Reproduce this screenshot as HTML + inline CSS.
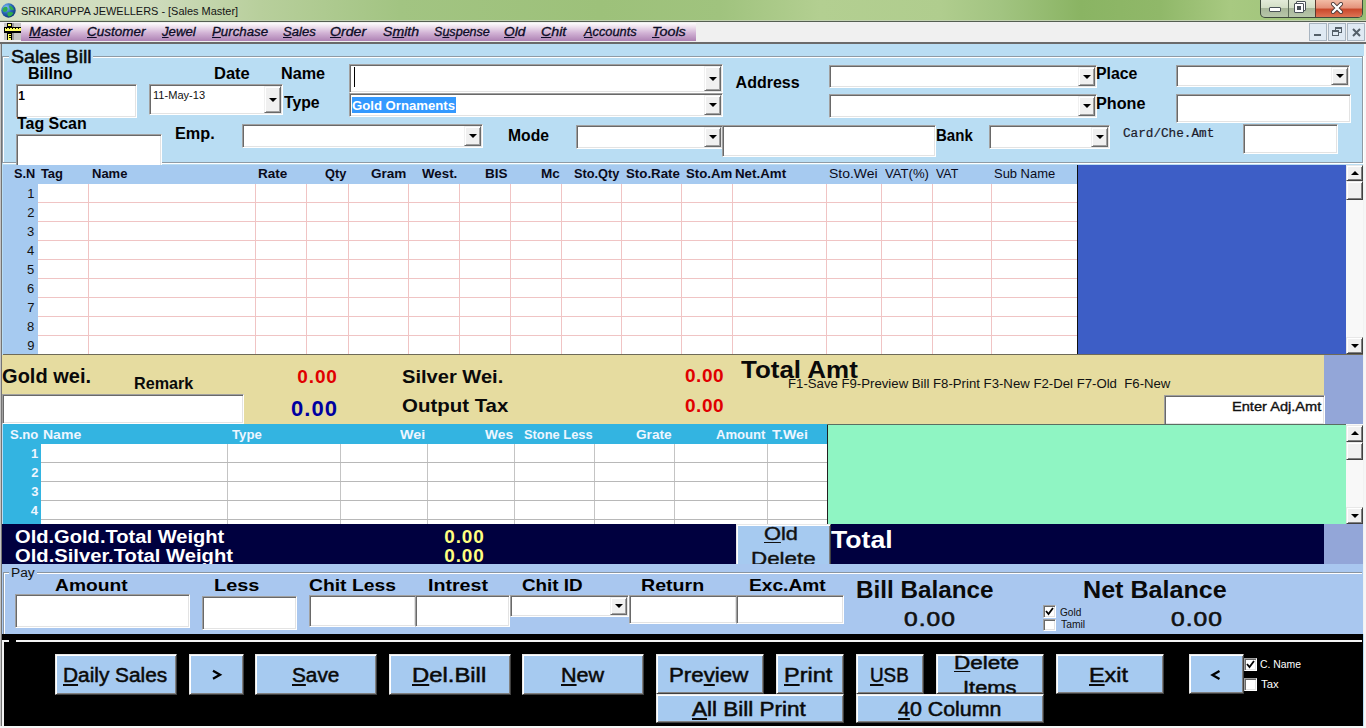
<!DOCTYPE html><html><head><meta charset="utf-8"><style>
*{margin:0;padding:0;box-sizing:border-box}
html,body{width:1366px;height:728px;overflow:hidden;background:#f0f0f0;font-family:"Liberation Sans",sans-serif}
div{position:absolute}
i{position:absolute;display:block;width:0;height:0}
.t{white-space:nowrap;line-height:1}
.sunk{border-top:1px solid #a0a0a0;border-left:1px solid #a0a0a0;border-bottom:1px solid #fff;border-right:1px solid #fff;box-shadow:inset 1px 1px 0 #696969,inset -1px -1px 0 #e3e3e3}
.ddb{background:#f0f0f0;border-top:1px solid #f0f0f0;border-left:1px solid #f0f0f0;border-bottom:1px solid #696969;border-right:1px solid #696969;box-shadow:inset 1px 1px 0 #fff,inset -1px -1px 0 #a0a0a0}
.ddb i{border-left:4px solid transparent;border-right:4px solid transparent;border-top:4px solid #000}
.rz{border-top:1px solid #e8e8e8;border-left:1px solid #e8e8e8;border-bottom:1px solid #404040;border-right:1px solid #404040;box-shadow:inset 1px 1px 0 #fff,inset -1px -1px 0 #808080}
.u{text-decoration:underline;text-underline-offset:0.1em;text-decoration-thickness:0.075em}
</style></head><body><div class="" style="left:0px;top:0px;width:1366px;height:21px;background:linear-gradient(90deg,#d3dfc4 0px,#cfdcbd 150px,#b8cf9c 260px,#a2c482 400px,#9dc17a 600px,#a0c37e 720px,#b3cf91 820px,#b0cd8e 940px,#a2c481 1000px,#8ab463 1080px,#90b869 1160px,#a8c981 1230px,#98bf74 1366px)"></div>
<div class="" style="left:0px;top:20px;width:1366px;height:1px;background:#c2d2b0"></div>
<div class="" style="left:0px;top:21px;width:1366px;height:1px;background:#555f52"></div>
<svg style="position:absolute;left:1px;top:3px" width="15" height="15" viewBox="0 0 15 15"><defs><radialGradient id="gg" cx="35%" cy="30%" r="70%"><stop offset="0" stop-color="#8fc8ff"/><stop offset="0.55" stop-color="#2a68b8"/><stop offset="1" stop-color="#123d80"/></radialGradient></defs><circle cx="7.5" cy="7.5" r="7.2" fill="url(#gg)"/><path d="M1.5 6 Q3.5 3 6 4 Q7.5 6 5.5 8.5 Q3 9.5 2 8Z M8 2.2 Q11.5 3 13 6.5 Q11 7.5 9 6 Q8 4 8 2.2Z M6.5 9.5 Q10 8.5 12.5 10 Q10.5 13.5 7.5 13.5 Q6 11.5 6.5 9.5Z" fill="#2fae4a"/></svg>
<div class="t" style="left:21.12px;top:6.00px;font-size:11.5px;font-weight:normal;color:#141414;transform:scaleX(0.9523);transform-origin:0 0;">SRIKARUPPA JEWELLERS - [Sales Master]</div>
<div style="left:1260px;top:0;width:103px;height:18px;border:1px solid #3e4a3c;border-top:none;border-radius:0 0 5px 5px;overflow:hidden;background:linear-gradient(#e3ebd9 0,#d3dfc6 45%,#a8b79a 50%,#b8c6aa 100%)"><div style="left:27px;top:0;width:1px;height:18px;background:#5c6a58"></div><div style="left:54px;top:0;width:48px;height:18px;background:linear-gradient(#f2bba5 0,#e4917a 45%,#c8472a 50%,#e07a5a 100%);border-left:1px solid #5a3a30"></div><div style="left:8px;top:7px;width:12px;height:5px;background:#fff;border:1px solid #4a5258;border-radius:1px"></div><div style="left:35px;top:1px;width:10px;height:10px;border:1px solid #4a5258;background:#fff;border-radius:1px"></div><div style="left:33px;top:3px;width:10px;height:10px;border:1px solid #4a5258;background:#fff;border-radius:1px"></div><div style="left:36px;top:6px;width:4px;height:4px;background:#4a5258"></div><svg style="position:absolute;left:70px;top:2px" width="12" height="12" viewBox="0 0 12 12"><path d="M2 2 L10 10 M10 2 L2 10" stroke="#4a3a38" stroke-width="4" stroke-linecap="round"/><path d="M2 2 L10 10 M10 2 L2 10" stroke="#fff" stroke-width="2.4" stroke-linecap="round"/></svg></div>
<div class="" style="left:0px;top:22px;width:1366px;height:20px;background:#f0f0f0"></div>
<div class="" style="left:21px;top:23px;width:675px;height:18px;background:linear-gradient(#fdfbfd 0%,#efe3ef 20%,#d2b3d5 55%,#ae82b4 100%)"></div>
<svg style="position:absolute;left:4px;top:23px" width="17" height="17" viewBox="0 0 17 17"><rect x="0" y="0" width="17" height="17" fill="#c6c6c6"/><rect x="8" y="0" width="2" height="17" fill="#9a9a9a"/><rect x="3" y="0" width="5" height="17" fill="#000"/><rect x="0" y="4" width="17" height="6" fill="#000"/><rect x="1" y="5" width="16" height="3" fill="#ffff60"/><rect x="2" y="5" width="1" height="1" fill="#000"/><rect x="5" y="5" width="1" height="1" fill="#000"/><rect x="8" y="5" width="1" height="1" fill="#000"/><rect x="11" y="5" width="1" height="1" fill="#000"/><rect x="14" y="5" width="1" height="1" fill="#000"/><rect x="4" y="1" width="3" height="2" fill="#ffff60"/><rect x="4" y="11" width="3" height="6" fill="#ffff60"/><rect x="5" y="12" width="2" height="1" fill="#000"/><rect x="5" y="14" width="2" height="1" fill="#000"/></svg>
<div class="t" style="left:28.53px;top:26.00px;font-size:12px;font-weight:normal;color:#0c0c26;font-style:italic;-webkit-text-stroke:0.3px #0c0c26;transform:scaleX(1.1717);transform-origin:0 0;"><span class="u">M</span>aster</div>
<div class="t" style="left:87.21px;top:26.00px;font-size:12px;font-weight:normal;color:#0c0c26;font-style:italic;-webkit-text-stroke:0.3px #0c0c26;transform:scaleX(1.1219);transform-origin:0 0;"><span class="u">C</span>ustomer</div>
<div class="t" style="left:162.00px;top:26.00px;font-size:12px;font-weight:normal;color:#0c0c26;font-style:italic;-webkit-text-stroke:0.3px #0c0c26;transform:scaleX(1.1003);transform-origin:0 0;"><span class="u">J</span>ewel</div>
<div class="t" style="left:211.56px;top:26.00px;font-size:12px;font-weight:normal;color:#0c0c26;font-style:italic;-webkit-text-stroke:0.3px #0c0c26;transform:scaleX(1.1044);transform-origin:0 0;"><span class="u">P</span>urchase</div>
<div class="t" style="left:282.67px;top:26.00px;font-size:12px;font-weight:normal;color:#0c0c26;font-style:italic;-webkit-text-stroke:0.3px #0c0c26;transform:scaleX(1.0884);transform-origin:0 0;"><span class="u">S</span>ales</div>
<div class="t" style="left:330.29px;top:26.00px;font-size:12px;font-weight:normal;color:#0c0c26;font-style:italic;-webkit-text-stroke:0.3px #0c0c26;transform:scaleX(1.1803);transform-origin:0 0;"><span class="u">O</span>rder</div>
<div class="t" style="left:382.65px;top:26.00px;font-size:12px;font-weight:normal;color:#0c0c26;font-style:italic;-webkit-text-stroke:0.3px #0c0c26;transform:scaleX(1.1745);transform-origin:0 0;">S<span class="u">m</span>ith</div>
<div class="t" style="left:433.69px;top:26.00px;font-size:12px;font-weight:normal;color:#0c0c26;font-style:italic;-webkit-text-stroke:0.3px #0c0c26;transform:scaleX(1.0456);transform-origin:0 0;">S<span class="u">u</span>spense</div>
<div class="t" style="left:504.32px;top:26.00px;font-size:12px;font-weight:normal;color:#0c0c26;font-style:italic;-webkit-text-stroke:0.3px #0c0c26;transform:scaleX(1.1413);transform-origin:0 0;"><span class="u">O</span>ld</div>
<div class="t" style="left:541.17px;top:26.00px;font-size:12px;font-weight:normal;color:#0c0c26;font-style:italic;-webkit-text-stroke:0.3px #0c0c26;transform:scaleX(1.1848);transform-origin:0 0;"><span class="u">C</span>hit</div>
<div class="t" style="left:583.64px;top:26.00px;font-size:12px;font-weight:normal;color:#0c0c26;font-style:italic;-webkit-text-stroke:0.3px #0c0c26;transform:scaleX(1.0664);transform-origin:0 0;"><span class="u">A</span>ccounts</div>
<div class="t" style="left:651.69px;top:26.00px;font-size:12px;font-weight:normal;color:#0c0c26;font-style:italic;-webkit-text-stroke:0.3px #0c0c26;transform:scaleX(1.1940);transform-origin:0 0;"><span class="u">T</span>ools</div>
<div style="left:1309px;top:23px;width:18px;height:18px;background:#dfe9f3;border:1px solid #a8b4c0"><div style="left:4px;top:10px;width:7px;height:2px;background:#55606a"></div></div>
<div style="left:1328px;top:23px;width:18px;height:18px;background:#dfe9f3;border:1px solid #a8b4c0"><div style="left:6px;top:3px;width:7px;height:6px;border:1px solid #55606a;border-top-width:2px"></div><div style="left:3px;top:6px;width:7px;height:6px;border:1px solid #55606a;border-top-width:2px;background:#dfe9f3"></div></div>
<div style="left:1347px;top:23px;width:18px;height:18px;background:#dfe9f3;border:1px solid #a8b4c0"><svg style="position:absolute;left:4px;top:4px" width="9" height="9" viewBox="0 0 9 9"><path d="M1 1 L8 8 M8 1 L1 8" stroke="#55606a" stroke-width="2"/></svg></div>
<div class="" style="left:0px;top:42px;width:1366px;height:2px;background:#6a6a6a"></div>
<div class="" style="left:0px;top:44px;width:1366px;height:684px;background:#b9ddf3"></div>
<div class="" style="left:0px;top:44px;width:1px;height:684px;background:#c4c4c4"></div>
<div class="" style="left:1px;top:44px;width:1px;height:684px;background:#747474"></div>
<div class="" style="left:1364px;top:44px;width:2px;height:684px;background:#f6f6f6"></div>
<div class="" style="left:2px;top:56px;width:1361px;height:1px;background:#8f9ba5"></div>
<div class="" style="left:3px;top:57px;width:1359px;height:1px;background:#fff"></div>
<div class="" style="left:2px;top:56px;width:1px;height:107px;background:#8f9ba5"></div>
<div class="" style="left:3px;top:57px;width:1px;height:106px;background:#fff"></div>
<div class="" style="left:1362px;top:56px;width:1px;height:107px;background:#8f9ba5"></div>
<div class="" style="left:1363px;top:56px;width:1px;height:108px;background:#fff"></div>
<div class="" style="left:2px;top:162px;width:1361px;height:1px;background:#8f9ba5"></div>
<div class="" style="left:3px;top:163px;width:1361px;height:1px;background:#fff"></div>
<div style="left:9px;top:50px;width:84px;height:12px;background:#b9ddf3"></div>
<div class="t" style="left:10.55px;top:48.00px;font-size:18.5px;font-weight:normal;color:#0a0a0a;-webkit-text-stroke:0.5px #0a0a0a;transform:scaleX(1.0608);transform-origin:0 0;">Sales Bill</div>
<div class="sunk" style="left:16px;top:84px;width:121px;height:34px;background:#fff;"></div>
<div class="t" style="left:18.30px;top:90.00px;font-size:12px;font-weight:bold;color:#000;">1</div>
<div class="sunk" style="left:149px;top:84px;width:134px;height:31px;background:#fff;"></div>
<div class="ddb" style="left:264px;top:86px;width:17px;height:27px;"><i style="left:3.5px;top:10.5px"></i></div>
<div class="t" style="left:152.90px;top:90.00px;font-size:11px;font-weight:normal;color:#111;transform:scaleX(1.0060);transform-origin:0 0;">11-May-13</div>
<div class="sunk" style="left:16px;top:134px;width:146px;height:34px;background:#fff;"></div>
<div class="sunk" style="left:349px;top:64px;width:374px;height:29px;background:#fff;"></div>
<div class="ddb" style="left:704px;top:66px;width:17px;height:25px;"><i style="left:3.5px;top:9.5px"></i></div>
<div style="left:354px;top:67px;width:1px;height:20px;background:#000"></div>
<div class="sunk" style="left:349px;top:93px;width:374px;height:24px;background:#fff;"></div>
<div class="ddb" style="left:704px;top:95px;width:17px;height:20px;"><i style="left:3.5px;top:7.0px"></i></div>
<div style="left:352px;top:97px;width:104px;height:16px;background:#3399ff"></div>
<div class="t" style="left:352.29px;top:99.00px;font-size:13px;font-weight:bold;color:#fff;transform:scaleX(1.0119);transform-origin:0 0;">Gold Ornaments</div>
<div class="sunk" style="left:242px;top:124px;width:241px;height:24px;background:#fff;"></div>
<div class="ddb" style="left:464px;top:126px;width:17px;height:20px;"><i style="left:3.5px;top:7.0px"></i></div>
<div class="sunk" style="left:576px;top:125px;width:147px;height:24px;background:#fff;"></div>
<div class="ddb" style="left:704px;top:127px;width:17px;height:20px;"><i style="left:3.5px;top:7.0px"></i></div>
<div class="sunk" style="left:722px;top:125px;width:214px;height:32px;background:#fff;"></div>
<div class="sunk" style="left:829px;top:65px;width:268px;height:23px;background:#fff;"></div>
<div class="ddb" style="left:1078px;top:67px;width:17px;height:19px;"><i style="left:3.5px;top:6.5px"></i></div>
<div class="sunk" style="left:829px;top:94px;width:268px;height:24px;background:#fff;"></div>
<div class="ddb" style="left:1078px;top:96px;width:17px;height:20px;"><i style="left:3.5px;top:7.0px"></i></div>
<div class="sunk" style="left:989px;top:125px;width:121px;height:24px;background:#fff;"></div>
<div class="ddb" style="left:1091px;top:127px;width:17px;height:20px;"><i style="left:3.5px;top:7.0px"></i></div>
<div class="sunk" style="left:1176px;top:65px;width:174px;height:22px;background:#fff;"></div>
<div class="ddb" style="left:1331px;top:67px;width:17px;height:18px;"><i style="left:3.5px;top:6.0px"></i></div>
<div class="sunk" style="left:1176px;top:94px;width:175px;height:29px;background:#fff;"></div>
<div class="sunk" style="left:1243px;top:124px;width:95px;height:30px;background:#fff;"></div>
<div class="t" style="left:28.39px;top:66.00px;font-size:16px;font-weight:bold;color:#000;transform:scaleX(1.0047);transform-origin:0 0;">Billno</div>
<div class="t" style="left:214.27px;top:66.00px;font-size:16px;font-weight:bold;color:#000;transform:scaleX(1.0302);transform-origin:0 0;">Date</div>
<div class="t" style="left:281.39px;top:66.00px;font-size:16px;font-weight:bold;color:#000;transform:scaleX(1.0119);transform-origin:0 0;">Name</div>
<div class="t" style="left:283.80px;top:95.00px;font-size:16px;font-weight:bold;color:#000;transform:scaleX(0.9859);transform-origin:0 0;">Type</div>
<div class="t" style="left:17.20px;top:116.00px;font-size:16px;font-weight:bold;color:#000;transform:scaleX(0.9971);transform-origin:0 0;">Tag Scan</div>
<div class="t" style="left:174.58px;top:126.00px;font-size:16px;font-weight:bold;color:#000;transform:scaleX(1.0162);transform-origin:0 0;">Emp.</div>
<div class="t" style="left:735.60px;top:75.00px;font-size:16px;font-weight:bold;color:#000;">Address</div>
<div class="t" style="left:1096.41px;top:66.00px;font-size:16px;font-weight:bold;color:#000;transform:scaleX(0.9900);transform-origin:0 0;">Place</div>
<div class="t" style="left:1096.39px;top:96.00px;font-size:16px;font-weight:bold;color:#000;transform:scaleX(1.0106);transform-origin:0 0;">Phone</div>
<div class="t" style="left:508.12px;top:128.00px;font-size:16px;font-weight:bold;color:#000;transform:scaleX(0.9801);transform-origin:0 0;">Mode</div>
<div class="t" style="left:935.97px;top:128.00px;font-size:16px;font-weight:bold;color:#000;transform:scaleX(0.9395);transform-origin:0 0;">Bank</div>
<div class="t" style="left:1122.69px;top:128.00px;font-size:12.5px;font-weight:normal;color:#1a1a2a;font-family:'Liberation Mono',monospace;-webkit-text-stroke:0.2px #1a1a2a;transform:scaleX(1.0136);transform-origin:0 0;">Card/Che.Amt</div>
<div class="" style="left:3px;top:165px;width:1075px;height:19px;background:#a6caf0"></div>
<div class="" style="left:3px;top:184px;width:35px;height:170px;background:#a6caf0"></div>
<div class="" style="left:38px;top:184px;width:1039px;height:170px;background:#fff"></div>
<div class="" style="left:88px;top:184px;width:1px;height:170px;background:#f0c4c4"></div>
<div class="" style="left:255px;top:184px;width:1px;height:170px;background:#f0c4c4"></div>
<div class="" style="left:306px;top:184px;width:1px;height:170px;background:#f0c4c4"></div>
<div class="" style="left:348px;top:184px;width:1px;height:170px;background:#f0c4c4"></div>
<div class="" style="left:408px;top:184px;width:1px;height:170px;background:#f0c4c4"></div>
<div class="" style="left:459px;top:184px;width:1px;height:170px;background:#f0c4c4"></div>
<div class="" style="left:510px;top:184px;width:1px;height:170px;background:#f0c4c4"></div>
<div class="" style="left:561px;top:184px;width:1px;height:170px;background:#f0c4c4"></div>
<div class="" style="left:621px;top:184px;width:1px;height:170px;background:#f0c4c4"></div>
<div class="" style="left:681px;top:184px;width:1px;height:170px;background:#f0c4c4"></div>
<div class="" style="left:732px;top:184px;width:1px;height:170px;background:#f0c4c4"></div>
<div class="" style="left:826px;top:184px;width:1px;height:170px;background:#f0c4c4"></div>
<div class="" style="left:881px;top:184px;width:1px;height:170px;background:#f0c4c4"></div>
<div class="" style="left:932px;top:184px;width:1px;height:170px;background:#f0c4c4"></div>
<div class="" style="left:991px;top:184px;width:1px;height:170px;background:#f0c4c4"></div>
<div class="" style="left:38px;top:202px;width:1039px;height:1px;background:#f0c4c4"></div>
<div class="t" style="left:27.20px;top:187.00px;font-size:13px;font-weight:normal;color:#111;">1</div>
<div class="" style="left:38px;top:221px;width:1039px;height:1px;background:#f0c4c4"></div>
<div class="t" style="left:27.20px;top:206.00px;font-size:13px;font-weight:normal;color:#111;">2</div>
<div class="" style="left:38px;top:240px;width:1039px;height:1px;background:#f0c4c4"></div>
<div class="t" style="left:27.10px;top:225.00px;font-size:13px;font-weight:normal;color:#111;">3</div>
<div class="" style="left:38px;top:259px;width:1039px;height:1px;background:#f0c4c4"></div>
<div class="t" style="left:26.90px;top:244.00px;font-size:13px;font-weight:normal;color:#111;">4</div>
<div class="" style="left:38px;top:278px;width:1039px;height:1px;background:#f0c4c4"></div>
<div class="t" style="left:27.10px;top:263.00px;font-size:13px;font-weight:normal;color:#111;">5</div>
<div class="" style="left:38px;top:297px;width:1039px;height:1px;background:#f0c4c4"></div>
<div class="t" style="left:27.10px;top:282.00px;font-size:13px;font-weight:normal;color:#111;">6</div>
<div class="" style="left:38px;top:316px;width:1039px;height:1px;background:#f0c4c4"></div>
<div class="t" style="left:27.20px;top:301.00px;font-size:13px;font-weight:normal;color:#111;">7</div>
<div class="" style="left:38px;top:335px;width:1039px;height:1px;background:#f0c4c4"></div>
<div class="t" style="left:27.10px;top:320.00px;font-size:13px;font-weight:normal;color:#111;">8</div>
<div class="t" style="left:27.20px;top:339.00px;font-size:13px;font-weight:normal;color:#111;">9</div>
<div class="t" style="left:13.91px;top:167.00px;font-size:13px;font-weight:bold;color:#0a0a1a;transform:scaleX(0.9804);transform-origin:0 0;">S.N</div>
<div class="t" style="left:40.90px;top:167.00px;font-size:13px;font-weight:bold;color:#0a0a1a;">Tag</div>
<div class="t" style="left:92.00px;top:167.00px;font-size:13px;font-weight:bold;color:#0a0a1a;">Name</div>
<div class="t" style="left:258.46px;top:167.00px;font-size:13px;font-weight:bold;color:#0a0a1a;transform:scaleX(1.0410);transform-origin:0 0;">Rate</div>
<div class="t" style="left:324.61px;top:167.00px;font-size:13px;font-weight:bold;color:#0a0a1a;transform:scaleX(0.9810);transform-origin:0 0;">Qty</div>
<div class="t" style="left:370.88px;top:167.00px;font-size:13px;font-weight:bold;color:#0a0a1a;transform:scaleX(1.0428);transform-origin:0 0;">Gram</div>
<div class="t" style="left:422.20px;top:167.00px;font-size:13px;font-weight:bold;color:#0a0a1a;transform:scaleX(1.0239);transform-origin:0 0;">West.</div>
<div class="t" style="left:485.46px;top:167.00px;font-size:13px;font-weight:bold;color:#0a0a1a;transform:scaleX(1.0394);transform-origin:0 0;">BIS</div>
<div class="t" style="left:540.66px;top:167.00px;font-size:13px;font-weight:bold;color:#0a0a1a;transform:scaleX(1.0419);transform-origin:0 0;">Mc</div>
<div class="t" style="left:573.61px;top:167.00px;font-size:13px;font-weight:bold;color:#0a0a1a;transform:scaleX(0.9825);transform-origin:0 0;">Sto.Qty</div>
<div class="t" style="left:625.59px;top:167.00px;font-size:13px;font-weight:bold;color:#0a0a1a;transform:scaleX(1.0212);transform-origin:0 0;">Sto.Rate</div>
<div class="t" style="left:685.59px;top:167.00px;font-size:13px;font-weight:bold;color:#0a0a1a;transform:scaleX(1.0158);transform-origin:0 0;">Sto.Am</div>
<div class="t" style="left:735.08px;top:167.00px;font-size:13px;font-weight:bold;color:#0a0a1a;transform:scaleX(1.0246);transform-origin:0 0;">Net.Amt</div>
<div class="t" style="left:829.36px;top:167.00px;font-size:13px;font-weight:normal;color:#0a0a1a;transform:scaleX(1.0731);transform-origin:0 0;">Sto.Wei</div>
<div class="t" style="left:884.90px;top:167.00px;font-size:13px;font-weight:normal;color:#0a0a1a;transform:scaleX(1.0094);transform-origin:0 0;">VAT(%)</div>
<div class="t" style="left:935.90px;top:167.00px;font-size:13px;font-weight:normal;color:#0a0a1a;transform:scaleX(0.9565);transform-origin:0 0;">VAT</div>
<div class="t" style="left:994.40px;top:167.00px;font-size:13px;font-weight:normal;color:#0a0a1a;transform:scaleX(0.9950);transform-origin:0 0;">Sub Name</div>
<div class="" style="left:1077px;top:165px;width:1px;height:189px;background:#101010"></div>
<div class="" style="left:1078px;top:165px;width:268px;height:189px;background:#3d5ec6"></div>
<div class="" style="left:1346px;top:165px;width:17px;height:189px;background:#f8f8f8"></div>
<div class="" style="left:1363px;top:164px;width:1px;height:470px;background:#f2f2f2"></div>
<div class="rz" style="left:1346px;top:165px;width:17px;height:16px;background:#f0f0f0;"><i style="left:4px;top:5px;border-left:4px solid transparent;border-right:4px solid transparent;border-bottom:4px solid #000"></i></div>
<div class="rz" style="left:1346px;top:181px;width:17px;height:19px;background:#f0f0f0;"></div>
<div class="rz" style="left:1346px;top:337px;width:17px;height:17px;background:#f0f0f0;"><i style="left:4px;top:6px;border-left:4px solid transparent;border-right:4px solid transparent;border-top:4px solid #000"></i></div>
<div class="" style="left:3px;top:354px;width:1360px;height:1px;background:#6e6a58"></div>
<div class="" style="left:2px;top:355px;width:1322px;height:69px;background:#e6dca0"></div>
<div class="" style="left:1324px;top:355px;width:39px;height:69px;background:#93a6d8"></div>
<div class="sunk" style="left:2px;top:394px;width:242px;height:30px;background:#fff;"></div>
<div class="t" style="left:2.10px;top:366.00px;font-size:20px;font-weight:bold;color:#0a0a0a;">Gold wei.</div>
<div class="t" style="left:134.42px;top:375.00px;font-size:16.5px;font-weight:bold;color:#0a0a0a;transform:scaleX(0.9798);transform-origin:0 0;">Remark</div>
<div class="t" style="left:297.30px;top:367.00px;font-size:19px;font-weight:bold;color:#e00000;letter-spacing:0.867px;">0.00</div>
<div class="t" style="left:290.90px;top:398.00px;font-size:22px;font-weight:bold;color:#0000a0;letter-spacing:1.100px;">0.00</div>
<div class="t" style="left:402.07px;top:367.00px;font-size:19px;font-weight:bold;color:#0a0a0a;transform:scaleX(1.0575);transform-origin:0 0;">Silver Wei.</div>
<div class="t" style="left:401.84px;top:396.00px;font-size:19px;font-weight:bold;color:#0a0a0a;transform:scaleX(1.0756);transform-origin:0 0;">Output Tax</div>
<div class="t" style="left:685.00px;top:366.00px;font-size:19px;font-weight:bold;color:#e00000;letter-spacing:0.533px;">0.00</div>
<div class="t" style="left:685.00px;top:396.00px;font-size:19px;font-weight:bold;color:#e00000;letter-spacing:0.533px;">0.00</div>
<div class="t" style="left:741.48px;top:358.00px;font-size:24.5px;font-weight:bold;color:#0a0a0a;transform:scaleX(1.0593);transform-origin:0 0;">Total Amt</div>
<div class="t" style="left:788.28px;top:377.00px;font-size:13px;font-weight:normal;color:#111;transform:scaleX(1.0141);transform-origin:0 0;">F1-Save F9-Preview Bill F8-Print F3-New F2-Del F7-Old&nbsp; F6-New</div>
<div class="sunk" style="left:1164px;top:395px;width:161px;height:30px;background:#fff;"></div>
<div class="t" style="left:1232.26px;top:400.00px;font-size:13px;font-weight:normal;color:#111;-webkit-text-stroke:0.35px #111;transform:scaleX(1.1239);transform-origin:0 0;">Enter Adj.Amt</div>
<div class="" style="left:3px;top:424px;width:824px;height:20px;background:#33b4e1"></div>
<div class="" style="left:3px;top:444px;width:38px;height:80px;background:#33b4e1"></div>
<div class="" style="left:41px;top:444px;width:786px;height:80px;background:#fff"></div>
<div class="" style="left:227px;top:444px;width:1px;height:80px;background:#c4c4c4"></div>
<div class="" style="left:340px;top:444px;width:1px;height:80px;background:#c4c4c4"></div>
<div class="" style="left:427px;top:444px;width:1px;height:80px;background:#c4c4c4"></div>
<div class="" style="left:514px;top:444px;width:1px;height:80px;background:#c4c4c4"></div>
<div class="" style="left:594px;top:444px;width:1px;height:80px;background:#c4c4c4"></div>
<div class="" style="left:674px;top:444px;width:1px;height:80px;background:#c4c4c4"></div>
<div class="" style="left:767px;top:444px;width:1px;height:80px;background:#c4c4c4"></div>
<div class="" style="left:41px;top:462px;width:786px;height:1px;background:#b8b8b8"></div>
<div class="t" style="left:31.10px;top:447.00px;font-size:13px;font-weight:bold;color:#eef6ff;">1</div>
<div class="" style="left:41px;top:481px;width:786px;height:1px;background:#b8b8b8"></div>
<div class="t" style="left:31.30px;top:466.00px;font-size:13px;font-weight:bold;color:#eef6ff;">2</div>
<div class="" style="left:41px;top:500px;width:786px;height:1px;background:#b8b8b8"></div>
<div class="t" style="left:31.20px;top:485.00px;font-size:13px;font-weight:bold;color:#eef6ff;">3</div>
<div class="" style="left:41px;top:519px;width:786px;height:1px;background:#b8b8b8"></div>
<div class="t" style="left:30.80px;top:504.00px;font-size:13px;font-weight:bold;color:#eef6ff;">4</div>
<div class="t" style="left:10.06px;top:429.00px;font-size:12px;font-weight:bold;color:#eef6ff;transform:scaleX(1.0913);transform-origin:0 0;">S.no</div>
<div class="t" style="left:43.27px;top:429.00px;font-size:12px;font-weight:bold;color:#eef6ff;transform:scaleX(1.1683);transform-origin:0 0;">Name</div>
<div class="t" style="left:231.69px;top:429.00px;font-size:12px;font-weight:bold;color:#eef6ff;transform:scaleX(1.0977);transform-origin:0 0;">Type</div>
<div class="t" style="left:400.40px;top:429.00px;font-size:12px;font-weight:bold;color:#eef6ff;transform:scaleX(1.1921);transform-origin:0 0;">Wei</div>
<div class="t" style="left:485.00px;top:429.00px;font-size:12px;font-weight:bold;color:#eef6ff;transform:scaleX(1.1458);transform-origin:0 0;">Wes</div>
<div class="t" style="left:524.17px;top:429.00px;font-size:12px;font-weight:bold;color:#eef6ff;transform:scaleX(1.0729);transform-origin:0 0;">Stone Less</div>
<div class="t" style="left:636.43px;top:429.00px;font-size:12px;font-weight:bold;color:#eef6ff;transform:scaleX(1.1377);transform-origin:0 0;">Grate</div>
<div class="t" style="left:715.67px;top:429.00px;font-size:12px;font-weight:bold;color:#eef6ff;transform:scaleX(1.0913);transform-origin:0 0;">Amount</div>
<div class="t" style="left:771.58px;top:429.00px;font-size:12px;font-weight:bold;color:#eef6ff;transform:scaleX(1.1763);transform-origin:0 0;">T.Wei</div>
<div class="" style="left:827px;top:424px;width:1px;height:100px;background:#202020"></div>
<div class="" style="left:828px;top:424px;width:518px;height:100px;background:#8ff5c3"></div>
<div class="" style="left:827px;top:424px;width:519px;height:1px;background:#5a6e62"></div>
<div class="" style="left:1346px;top:424px;width:17px;height:100px;background:#f8f8f8"></div>
<div class="rz" style="left:1346px;top:425px;width:17px;height:17px;background:#f0f0f0;"><i style="left:4px;top:5px;border-left:4px solid transparent;border-right:4px solid transparent;border-bottom:4px solid #000"></i></div>
<div class="rz" style="left:1346px;top:442px;width:17px;height:18px;background:#f0f0f0;"></div>
<div class="rz" style="left:1346px;top:507px;width:17px;height:17px;background:#f0f0f0;"><i style="left:4px;top:6px;border-left:4px solid transparent;border-right:4px solid transparent;border-top:4px solid #000"></i></div>
<div class="" style="left:2px;top:524px;width:1322px;height:40px;background:#00003f"></div>
<div class="" style="left:1324px;top:524px;width:39px;height:40px;background:#93a6d8"></div>
<div class="t" style="left:15.34px;top:528.00px;font-size:18.8px;font-weight:bold;color:#fff;transform:scaleX(1.0709);transform-origin:0 0;">Old.Gold.Total Weight</div>
<div class="t" style="left:15.34px;top:547.00px;font-size:18.8px;font-weight:bold;color:#fff;transform:scaleX(1.0748);transform-origin:0 0;">Old.Silver.Total Weight</div>
<div class="t" style="left:444.30px;top:527.00px;font-size:19px;font-weight:bold;color:#ffff80;letter-spacing:0.833px;">0.00</div>
<div class="t" style="left:444.30px;top:546.00px;font-size:19px;font-weight:bold;color:#ffff80;letter-spacing:0.833px;">0.00</div>
<div class="rz" style="left:736px;top:524px;width:95px;height:42px;background:#a6caf0;"></div>
<div style="left:737px;top:525px;width:93px;height:39px;overflow:hidden">
<div class="t" style="left:26.57px;top:-1.00px;font-size:19px;font-weight:normal;color:#111;-webkit-text-stroke:0.4px #111;transform:scaleX(1.1460);transform-origin:0 0;"><span class="u">O</span>ld</div>
<div class="t" style="left:13.73px;top:24.00px;font-size:19px;font-weight:normal;color:#111;-webkit-text-stroke:0.4px #111;transform:scaleX(1.1768);transform-origin:0 0;">Delete</div>
</div>
<div class="t" style="left:831.27px;top:528.00px;font-size:24px;font-weight:bold;color:#fff;transform:scaleX(1.1082);transform-origin:0 0;">Total</div>
<div class="" style="left:2px;top:564px;width:1361px;height:70px;background:#a9c7ef"></div>
<div class="" style="left:3px;top:572px;width:1359px;height:1px;background:#8894a0"></div>
<div class="" style="left:3px;top:573px;width:1359px;height:1px;background:#fff"></div>
<div class="" style="left:3px;top:572px;width:1px;height:62px;background:#8894a0"></div>
<div class="" style="left:4px;top:573px;width:1px;height:61px;background:#fff"></div>
<div style="left:9px;top:566px;width:28px;height:12px;background:#a9c7ef"></div>
<div class="t" style="left:10.66px;top:567.00px;font-size:12px;font-weight:normal;color:#111;transform:scaleX(1.1421);transform-origin:0 0;">Pay</div>
<div class="sunk" style="left:15px;top:594px;width:175px;height:34px;background:#fff;"></div>
<div class="sunk" style="left:202px;top:596px;width:95px;height:34px;background:#fff;"></div>
<div class="sunk" style="left:309px;top:595px;width:107px;height:32px;background:#fff;"></div>
<div class="sunk" style="left:415px;top:595px;width:95px;height:32px;background:#fff;"></div>
<div class="sunk" style="left:510px;top:595px;width:119px;height:22px;background:#fff;"></div>
<div class="ddb" style="left:610px;top:597px;width:17px;height:18px;"><i style="left:3.5px;top:6.0px"></i></div>
<div class="sunk" style="left:629px;top:595px;width:108px;height:29px;background:#fff;"></div>
<div class="sunk" style="left:736px;top:595px;width:108px;height:29px;background:#fff;"></div>
<div class="t" style="left:54.73px;top:577.00px;font-size:16.5px;font-weight:bold;color:#000;transform:scaleX(1.1653);transform-origin:0 0;">Amount</div>
<div class="t" style="left:214.37px;top:577.00px;font-size:16.5px;font-weight:bold;color:#000;transform:scaleX(1.2067);transform-origin:0 0;">Less</div>
<div class="t" style="left:309.08px;top:577.00px;font-size:16.5px;font-weight:bold;color:#000;transform:scaleX(1.1701);transform-origin:0 0;">Chit Less</div>
<div class="t" style="left:428.19px;top:577.00px;font-size:16.5px;font-weight:bold;color:#000;transform:scaleX(1.1894);transform-origin:0 0;">Intrest</div>
<div class="t" style="left:522.00px;top:577.00px;font-size:16.5px;font-weight:bold;color:#000;transform:scaleX(1.1412);transform-origin:0 0;">Chit ID</div>
<div class="t" style="left:641.19px;top:577.00px;font-size:16.5px;font-weight:bold;color:#000;transform:scaleX(1.1879);transform-origin:0 0;">Return</div>
<div class="t" style="left:748.72px;top:577.00px;font-size:16.5px;font-weight:bold;color:#000;transform:scaleX(1.1623);transform-origin:0 0;">Exc.Amt</div>
<div class="t" style="left:855.52px;top:579.00px;font-size:23px;font-weight:bold;color:#0a0a0a;transform:scaleX(1.0554);transform-origin:0 0;">Bill Balance</div>
<div class="t" style="left:903.74px;top:609.00px;font-size:20.5px;font-weight:normal;color:#111;letter-spacing:0.872px;-webkit-text-stroke:0.6px #111;transform:scaleX(1.2000);transform-origin:0 0;">0.00</div>
<div class="t" style="left:1082.56px;top:579.00px;font-size:23px;font-weight:bold;color:#0a0a0a;transform:scaleX(1.0920);transform-origin:0 0;">Net Balance</div>
<div class="t" style="left:1170.74px;top:609.00px;font-size:20.5px;font-weight:normal;color:#111;letter-spacing:0.844px;-webkit-text-stroke:0.6px #111;transform:scaleX(1.2000);transform-origin:0 0;">0.00</div>
<div class="sunk" style="left:1043px;top:605px;width:13px;height:13px;background:#fff;"></div>
<svg style="position:absolute;left:1045px;top:607px" width="9" height="9" viewBox="0 0 9 9"><path d="M1 4 L3.5 7 L8 1" stroke="#000" stroke-width="1.8" fill="none"/></svg>
<div class="sunk" style="left:1043px;top:619px;width:13px;height:12px;background:#fff;"></div>
<div class="t" style="left:1060.34px;top:607.00px;font-size:11px;font-weight:normal;color:#111;transform:scaleX(0.9182);transform-origin:0 0;">Gold</div>
<div class="t" style="left:1060.61px;top:619.00px;font-size:11px;font-weight:normal;color:#111;transform:scaleX(0.9393);transform-origin:0 0;">Tamil</div>
<div class="" style="left:2px;top:634px;width:1361px;height:92px;background:#000"></div>
<div class="" style="left:2px;top:640px;width:1360px;height:2px;background:#f4f4f4"></div>
<div class="" style="left:9px;top:640px;width:7px;height:2px;background:#000"></div>
<div class="" style="left:2px;top:640px;width:2px;height:86px;background:#f4f4f4"></div>
<div class="" style="left:0px;top:726px;width:1366px;height:2px;background:#f6f6f6"></div>
<div class="rz" style="left:55px;top:654px;width:122px;height:41px;background:#a6caf0;"></div>
<div class="t" style="left:63.03px;top:665.00px;font-size:20px;font-weight:normal;color:#0a0a0a;-webkit-text-stroke:0.5px #0a0a0a;transform:scaleX(1.0420);transform-origin:0 0;"><span class="u">D</span>aily Sales</div>
<div class="rz" style="left:189px;top:654px;width:55px;height:41px;background:#a6caf0;"></div>
<svg style="position:absolute;left:210px;top:668px" width="14" height="14" viewBox="0 0 14 14"><path d="M3 2.8 L10 6.8 L3 10.8" stroke="#000" stroke-width="2.3" fill="none" stroke-linejoin="miter"/></svg>
<div class="rz" style="left:255px;top:654px;width:122px;height:41px;background:#a6caf0;"></div>
<div class="t" style="left:291.97px;top:665.00px;font-size:20px;font-weight:normal;color:#0a0a0a;-webkit-text-stroke:0.5px #0a0a0a;transform:scaleX(1.0388);transform-origin:0 0;"><span class="u">S</span>ave</div>
<div class="rz" style="left:389px;top:654px;width:122px;height:41px;background:#a6caf0;"></div>
<div class="t" style="left:412.49px;top:665.00px;font-size:20px;font-weight:normal;color:#0a0a0a;-webkit-text-stroke:0.5px #0a0a0a;transform:scaleX(1.1922);transform-origin:0 0;"><span class="u">D</span>el.Bill</div>
<div class="rz" style="left:522px;top:654px;width:122px;height:41px;background:#a6caf0;"></div>
<div class="t" style="left:560.58px;top:665.00px;font-size:20px;font-weight:normal;color:#0a0a0a;-webkit-text-stroke:0.5px #0a0a0a;transform:scaleX(1.0779);transform-origin:0 0;"><span class="u">N</span>ew</div>
<div class="rz" style="left:656px;top:654px;width:108px;height:40px;background:#a6caf0;"></div>
<div class="t" style="left:668.92px;top:665.00px;font-size:20px;font-weight:normal;color:#0a0a0a;-webkit-text-stroke:0.5px #0a0a0a;transform:scaleX(1.1135);transform-origin:0 0;">Pre<span class="u">v</span>iew</div>
<div class="rz" style="left:776px;top:654px;width:68px;height:40px;background:#a6caf0;"></div>
<div class="t" style="left:784.12px;top:665.00px;font-size:20px;font-weight:normal;color:#0a0a0a;-webkit-text-stroke:0.5px #0a0a0a;transform:scaleX(1.1726);transform-origin:0 0;"><span class="u">P</span>rint</div>
<div class="rz" style="left:656px;top:694px;width:188px;height:29px;background:#a6caf0;"></div>
<div class="t" style="left:692.30px;top:699.00px;font-size:20px;font-weight:normal;color:#0a0a0a;-webkit-text-stroke:0.5px #0a0a0a;transform:scaleX(1.1257);transform-origin:0 0;"><span class="u">A</span>ll Bill Print</div>
<div class="rz" style="left:856px;top:654px;width:68px;height:40px;background:#a6caf0;"></div>
<div class="t" style="left:869.79px;top:665.00px;font-size:20px;font-weight:normal;color:#0a0a0a;-webkit-text-stroke:0.5px #0a0a0a;transform:scaleX(0.9404);transform-origin:0 0;"><span class="u">U</span>SB</div>
<div class="rz" style="left:936px;top:654px;width:108px;height:40px;background:#a6caf0;"></div>
<div style="left:937px;top:655px;width:106px;height:38px;overflow:hidden">
<div class="t" style="left:16.70px;top:0.00px;font-size:17.5px;font-weight:normal;color:#0a0a0a;-webkit-text-stroke:0.45px #0a0a0a;transform:scaleX(1.2866);transform-origin:0 0;"><span class="u">D</span>elete</div>
<div class="t" style="left:25.70px;top:25.00px;font-size:17.5px;font-weight:normal;color:#0a0a0a;-webkit-text-stroke:0.45px #0a0a0a;transform:scaleX(1.2469);transform-origin:0 0;">Items</div>
</div>
<div class="rz" style="left:856px;top:694px;width:188px;height:29px;background:#a6caf0;"></div>
<div class="t" style="left:897.87px;top:699.00px;font-size:20px;font-weight:normal;color:#0a0a0a;-webkit-text-stroke:0.5px #0a0a0a;transform:scaleX(1.0684);transform-origin:0 0;"><span class="u">4</span>0 Column</div>
<div class="rz" style="left:1056px;top:654px;width:108px;height:40px;background:#a6caf0;"></div>
<div class="t" style="left:1089.43px;top:665.00px;font-size:20px;font-weight:normal;color:#0a0a0a;-webkit-text-stroke:0.5px #0a0a0a;transform:scaleX(1.1709);transform-origin:0 0;"><span class="u">E</span>xit</div>
<div class="rz" style="left:1189px;top:654px;width:55px;height:40px;background:#a6caf0;"></div>
<svg style="position:absolute;left:1209px;top:668px" width="14" height="14" viewBox="0 0 14 14"><path d="M10.5 3 L3.5 7 L10.5 11" stroke="#000" stroke-width="2.3" fill="none" stroke-linejoin="miter"/></svg>
<div class="sunk" style="left:1244px;top:658px;width:13px;height:13px;background:#fff;"></div>
<svg style="position:absolute;left:1246px;top:660px" width="9" height="9" viewBox="0 0 9 9"><path d="M1 4 L3.5 7 L8 1" stroke="#000" stroke-width="1.8" fill="none"/></svg>
<div class="sunk" style="left:1244px;top:678px;width:13px;height:13px;background:#fff;"></div>
<div class="t" style="left:1260.26px;top:659.00px;font-size:11.5px;font-weight:normal;color:#fff;transform:scaleX(0.9052);transform-origin:0 0;">C. Name</div>
<div class="t" style="left:1260.60px;top:679.00px;font-size:11.5px;font-weight:normal;color:#fff;transform:scaleX(0.9829);transform-origin:0 0;">Tax</div></body></html>
